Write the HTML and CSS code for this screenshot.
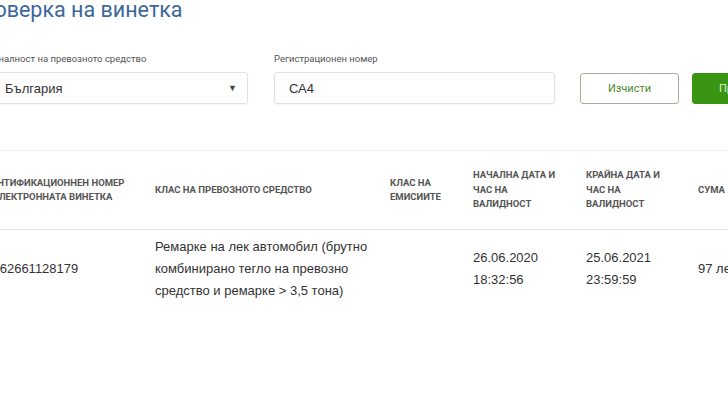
FILE: index.html
```html
<!DOCTYPE html>
<html lang="bg">
<head>
    <meta charset="UTF-8" />
    <title>Проверка на винетка</title>
    <meta name="viewport" content="width=device-width, initial-scale=1">
    <link rel="stylesheet" href="styles.css">
</head>
<body>

<div class="page">
  <h1 class="title">Проверка на винетка</h1>

  <form class="search">
    <div class="field field-country">
      <label>Националност на превозното средство</label>
      <div class="select">
        <span>България</span>
        <span class="arrow">&#9660;</span>
      </div>
    </div>
    <div class="field field-plate">
      <label>Регистрационен номер</label>
      <div class="input">СА4</div>
    </div>
    <div class="buttons">
      <button type="button" class="btn btn-clear">Изчисти</button>
      <button type="button" class="btn btn-check">Провери</button>
    </div>
  </form>

  <table class="results">
    <colgroup>
      <col class="c-id">
      <col class="c-class">
      <col class="c-emis">
      <col class="c-start">
      <col class="c-end">
      <col class="c-sum">
    </colgroup>
    <thead>
      <tr>
        <th>Идентификационнен номер<br>на електронната винетка</th>
        <th>Клас на превозното средство</th>
        <th>Клас на емисиите</th>
        <th>Начална дата и час на валидност</th>
        <th>Крайна дата и час на валидност</th>
        <th>Сума</th>
      </tr>
    </thead>
    <tbody>
      <tr>
        <td>40262661128179</td>
        <td>Ремарке на лек автомобил (брутно комбинирано тегло на превозно средство и ремарке &gt; 3,5 тона)</td>
        <td></td>
        <td>26.06.2020<br>18:32:56</td>
        <td>25.06.2021<br>23:59:59</td>
        <td>97 лева</td>
      </tr>
    </tbody>
  </table>
</div>

</body>
</html>
```

FILE: styles.css
```css
* {
  box-sizing: border-box;
}

body {
  margin: 0;
  background: #fff;
  font-family: "Liberation Sans", Arial, sans-serif;
  color: #333;
  overflow: hidden;
}

/* whole page is scrolled a bit to the right in the shot */
.page {
  margin-left: -30px;
  width: 840px;
}

.title {
  margin: -5px 0 0 -3px;
  font-family: Roboto, "Liberation Sans", sans-serif;
  font-weight: 400;
  font-size: 21.5px;
  line-height: 30px;
  color: #3d6898;
}

/* search form */
.search {
  display: flex;
  align-items: flex-end;
  margin-top: 28px;
}

.field label {
  display: block;
  font-family: Roboto, "Liberation Sans", sans-serif;
  font-size: 9.5px;
  color: #555;
  margin-bottom: 8px;
}

.field-country {
  width: 278px;
}

.field-plate {
  width: 281px;
  margin-left: 26px;
}

.select,
.input {
  height: 32px;
  border: 1px solid #e2e2e2;
  border-radius: 3px;
  box-shadow: 0 1px 2px rgba(0, 0, 0, 0.05);
  font-size: 13px;
  color: #333;
  display: flex;
  align-items: center;
}

.select {
  justify-content: space-between;
  padding: 0 10px 0 34px;
}

.select .arrow {
  font-size: 9px;
  color: #444;
}

.input {
  padding: 0 14px;
}

.buttons {
  display: flex;
  gap: 13px;
  margin-left: 25px;
}

.btn {
  width: 99px;
  height: 31px;
  border-radius: 3px;
  font-family: Roboto, "Liberation Sans", sans-serif;
  font-size: 11px;
  cursor: pointer;
}

.btn-clear {
  background: #fff;
  border: 1px solid #a3b297;
  color: #4c8a2e;
}

.btn-check {
  background: #3a9612;
  border: 1px solid #3a9612;
  color: #d9f0cc;
}

/* results table */
.results {
  width: 850px;
  margin-top: 46px;
  border-collapse: collapse;
  table-layout: fixed;
}

.c-id { width: 177px; }
.c-class { width: 235px; }
.c-emis { width: 83px; }
.c-start { width: 113px; }
.c-end { width: 112px; }
.c-sum { width: 130px; }

.results th {
  height: 79px;
  padding: 0 14px 0 8px;
  border-top: 1px solid #eee;
  border-bottom: 1px solid #e4e4e4;
  text-align: left;
  vertical-align: middle;
  font-family: Roboto, "Liberation Sans", sans-serif;
  font-size: 9.5px;
  font-weight: 700;
  line-height: 14.5px;
  text-transform: uppercase;
  color: #555;
}

.results td {
  height: 78px;
  padding: 0 8px;
  vertical-align: middle;
  font-size: 13px;
  line-height: 22px;
  color: #333;
}
```
